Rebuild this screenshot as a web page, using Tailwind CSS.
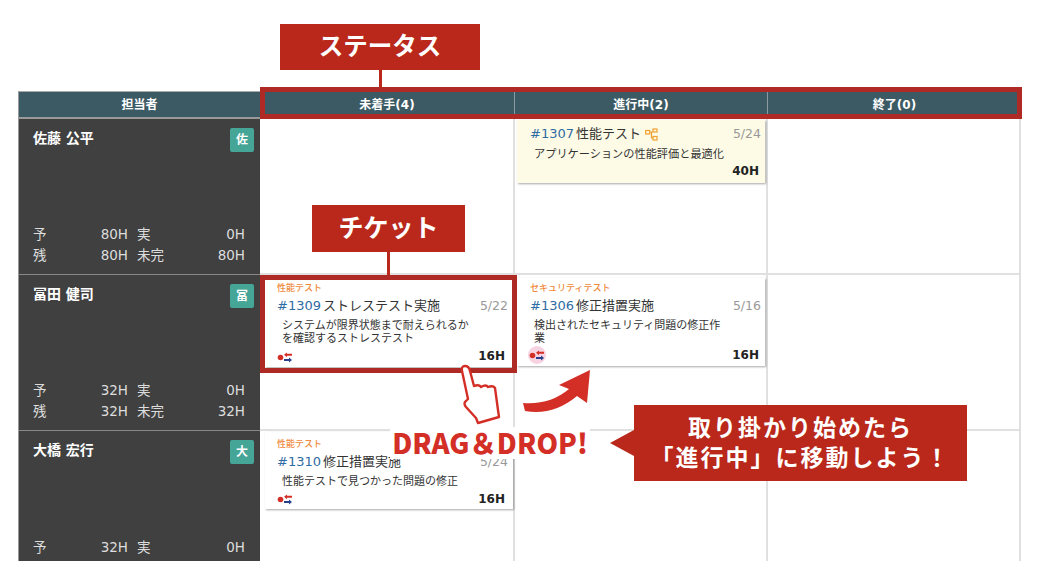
<!DOCTYPE html>
<html lang="ja">

<head>
    <meta charset="UTF-8">
    <title>チケットボード</title>
    <script src="https://cdn.jsdelivr.net/npm/@tailwindcss/browser@4"></script>
</head>

<body class="bg-white">
    <div class="relative w-[1040px] h-[585px] overflow-hidden pt-[91px] pl-[18px] font-['DejaVu_Sans','Noto_Sans_CJK_JP',sans-serif]">
        <!-- Board -->
        <div class="w-[1003px] h-[470px] overflow-hidden grid grid-cols-[242px_255px_253px_253px] grid-rows-[28px_156px_156px_156px]">
            <!-- Header -->
            <div class="bg-[#3c5a64] text-white text-[12px] font-bold flex items-center justify-center border-t border-l border-b-2 border-t-[#aaa] border-l-[#999] border-b-[#999]">担当者</div>
            <div class="bg-[#3c5a64] text-white text-[12px] font-bold flex items-center justify-center border-r border-[#8a9ba1]">未着手(4)</div>
            <div class="bg-[#3c5a64] text-white text-[12px] font-bold flex items-center justify-center border-r border-[#8a9ba1]">進行中(2)</div>
            <div class="bg-[#3c5a64] text-white text-[12px] font-bold flex items-center justify-center">終了(0)</div>

            <!-- Row 1 -->
            <div class="bg-[#404040] border-l border-l-[#999] border-b border-b-[#888] pl-[14px] pr-[6px] pt-[9px] flex flex-col justify-between pb-[8px]">
                <div class="flex justify-between">
                    <span class="text-white text-[14px] font-bold">佐藤 公平</span>
                    <span class="w-[24px] h-[24px] bg-[#45a597] rounded-[2px] text-white text-[12px] font-bold flex items-center justify-center">佐</span>
                </div>
                <div class="grid grid-cols-[20px_75px_9px_1fr] text-[#ddd] text-[13.5px] leading-[21px] pr-[9px]">
                    <span>予</span><span class="text-right">80H</span><span></span><span class="flex justify-between"><span>実</span><span>0H</span></span>
                    <span>残</span><span class="text-right">80H</span><span></span><span class="flex justify-between"><span>未完</span><span>80H</span></span>
                </div>
            </div>
            <div class="border-b-2 border-r-2 border-[#e0e0e0]"></div>
            <div class="border-b-2 border-r-2 border-[#e0e0e0] pl-[2px] pt-[1px]">
                <div class="w-[248px] h-[63px] bg-[#fdfae6] shadow-[1px_1px_2px_rgba(0,0,0,0.35)] pl-[13px] pr-[4px] pt-[6px] relative">
                    <div class="flex justify-between items-center h-[16px]">
                        <span class="flex items-center text-[13px] text-[#333]"><span class="text-[#2f6ca3] mr-[2px]">#1307</span>性能テスト
                            <svg class="ml-[4px]" width="13" height="13" viewBox="0 0 13 13" fill="none" stroke="#f0a030" stroke-width="1.2"><rect x="0.7" y="2.5" width="4" height="3.5" /><rect x="8" y="1" width="4" height="3" /><rect x="8" y="8.5" width="4" height="3.5" /><path d="M4.7 4H8M6.5 4V10H8" /></svg>
                        </span>
                        <span class="text-[12.5px] text-[#999]">5/24</span>
                    </div>
                    <p class="text-[11.2px] leading-[13px] text-[#333] pl-[4px] mt-[6px] whitespace-nowrap">アプリケーションの性能評価と最適化</p>
                    <span class="absolute right-[6px] bottom-[3px] text-[12px] font-bold text-[#222]">40H</span>
                </div>
            </div>
            <div class="border-b-2 border-r-2 border-[#e0e0e0]"></div>

            <!-- Row 2 -->
            <div class="bg-[#404040] border-l border-l-[#999] border-b border-b-[#888] pl-[14px] pr-[6px] pt-[9px] flex flex-col justify-between pb-[8px]">
                <div class="flex justify-between">
                    <span class="text-white text-[14px] font-bold">冨田 健司</span>
                    <span class="w-[24px] h-[24px] bg-[#45a597] rounded-[2px] text-white text-[12px] font-bold flex items-center justify-center">冨</span>
                </div>
                <div class="grid grid-cols-[20px_75px_9px_1fr] text-[#ddd] text-[13.5px] leading-[21px] pr-[9px]">
                    <span>予</span><span class="text-right">32H</span><span></span><span class="flex justify-between"><span>実</span><span>0H</span></span>
                    <span>残</span><span class="text-right">32H</span><span></span><span class="flex justify-between"><span>未完</span><span>32H</span></span>
                </div>
            </div>
            <div class="border-b-2 border-r-2 border-[#e0e0e0] pl-[5px] pt-[5px]">
                <div class="w-[248px] h-[87px] bg-white shadow-[1px_1px_2px_rgba(0,0,0,0.35)] pl-[12px] pr-[5px] pt-[2px] relative">
                    <div class="text-[9px] leading-[12px] font-medium text-[#f08a3c]">性能テスト</div>
                    <div class="flex justify-between items-center h-[16px] mt-[4px]">
                        <span class="text-[13px] text-[#333]"><span class="text-[#2f6ca3] mr-[2px]">#1309</span>ストレステスト実施</span>
                        <span class="text-[12.5px] text-[#999]">5/22</span>
                    </div>
                    <p class="text-[11px] leading-[13px] text-[#333] pl-[5px] mt-[5px] whitespace-nowrap">システムが限界状態まで耐えられるか<br>を確認するストレステスト</p>
                    <svg class="absolute left-[12px] bottom-[4px]" width="16" height="11" viewBox="0 0 16 11"><circle cx="3.5" cy="5.5" r="2.8" fill="#d32f27" /><path d="M7 2.8L10 0.4V1.8H15V3.8H10V5.2Z" fill="#d32f27" /><path d="M15 8L12 5.6V7H7V9H12V10.4Z" fill="#28408c" /></svg>
                    <span class="absolute right-[8px] bottom-[2px] text-[12px] font-bold text-[#222]">16H</span>
                </div>
            </div>
            <div class="border-b-2 border-r-2 border-[#e0e0e0] pl-[2px] pt-[3px]">
                <div class="w-[248px] h-[88px] bg-white shadow-[1px_1px_2px_rgba(0,0,0,0.35)] pl-[13px] pr-[4px] pt-[4px] relative">
                    <div class="text-[9px] leading-[12px] font-medium text-[#f08a3c]">セキュリティテスト</div>
                    <div class="flex justify-between items-center h-[16px] mt-[4px]">
                        <span class="text-[13px] text-[#333]"><span class="text-[#2f6ca3] mr-[2px]">#1306</span>修正措置実施</span>
                        <span class="text-[12.5px] text-[#999]">5/16</span>
                    </div>
                    <p class="text-[11px] leading-[13px] text-[#333] pl-[4px] mt-[5px] whitespace-nowrap">検出されたセキュリティ問題の修正作<br>業</p>
                    <span class="absolute left-[11px] bottom-[2px] w-[18px] h-[18px] rounded-full bg-[#f7d3e2] flex items-center justify-center">
                        <svg width="16" height="11" viewBox="0 0 16 11"><circle cx="3.5" cy="5.5" r="2.8" fill="#d32f27" /><path d="M7 2.8L10 0.4V1.8H15V3.8H10V5.2Z" fill="#d32f27" /><path d="M15 8L12 5.6V7H7V9H12V10.4Z" fill="#28408c" /></svg>
                    </span>
                    <span class="absolute right-[6px] bottom-[2px] text-[12px] font-bold text-[#222]">16H</span>
                </div>
            </div>
            <div class="border-b-2 border-r-2 border-[#e0e0e0]"></div>

            <!-- Row 3 -->
            <div class="bg-[#404040] border-l border-l-[#999] pl-[14px] pr-[6px] pt-[9px] flex flex-col justify-between pb-[8px]">
                <div class="flex justify-between">
                    <span class="text-white text-[14px] font-bold">大橋 宏行</span>
                    <span class="w-[24px] h-[24px] bg-[#45a597] rounded-[2px] text-white text-[12px] font-bold flex items-center justify-center">大</span>
                </div>
                <div class="grid grid-cols-[20px_75px_9px_1fr] text-[#ddd] text-[13.5px] leading-[21px] pr-[9px]">
                    <span>予</span><span class="text-right">32H</span><span></span><span class="flex justify-between"><span>実</span><span>0H</span></span>
                    <span>残</span><span class="text-right">32H</span><span></span><span class="flex justify-between"><span>未完</span><span>32H</span></span>
                </div>
            </div>
            <div class="border-r-2 border-[#e0e0e0] pl-[5px] pt-[1px]">
                <div class="w-[248px] h-[77px] bg-white shadow-[1px_1px_2px_rgba(0,0,0,0.35)] pl-[12px] pr-[5px] pt-[6px] relative">
                    <div class="text-[9px] leading-[12px] font-medium text-[#f08a3c]">性能テスト</div>
                    <div class="flex justify-between items-center h-[16px] mt-[4px]">
                        <span class="text-[13px] text-[#333]"><span class="text-[#2f6ca3] mr-[2px]">#1310</span>修正措置実施</span>
                        <span class="text-[12.5px] text-[#999]">5/24</span>
                    </div>
                    <p class="text-[11px] leading-[13px] text-[#333] pl-[5px] mt-[5px] whitespace-nowrap">性能テストで見つかった問題の修正</p>
                    <svg class="absolute left-[12px] bottom-[4px]" width="16" height="11" viewBox="0 0 16 11"><circle cx="3.5" cy="5.5" r="2.8" fill="#d32f27" /><path d="M7 2.8L10 0.4V1.8H15V3.8H10V5.2Z" fill="#d32f27" /><path d="M15 8L12 5.6V7H7V9H12V10.4Z" fill="#28408c" /></svg>
                    <span class="absolute right-[8px] bottom-[1px] text-[12px] font-bold text-[#222]">16H</span>
                </div>
            </div>
            <div class="border-r-2 border-[#e0e0e0]"></div>
            <div class="border-r-2 border-[#e0e0e0]"></div>
        </div>

        <!-- Annotations over the board -->
        <div class="absolute left-[260px] top-[87px] w-[762px] h-[32px] border-[5px] border-[#b02a25]"></div>
        <div class="absolute left-[379px] top-[70px] w-[3px] h-[18px] bg-[#b9281b]"></div>
        <div class="absolute left-[280px] top-[24px] w-[200px] h-[46px] bg-[#b9281b] text-white text-[24.5px] font-bold flex items-center justify-center pt-[1px]">ステータス</div>

        <div class="absolute left-[387px] top-[252px] w-[3px] h-[24px] bg-[#b9281b]"></div>
        <div class="absolute left-[312px] top-[205px] w-[153px] h-[47px] bg-[#b9281b] text-white text-[25px] font-bold flex items-center justify-center">チケット</div>
        <div class="absolute left-[260px] top-[275px] w-[257px] h-[98px] border-[5px] border-[#b02a25]"></div>

        <svg class="absolute left-[0px] top-[0px]" width="1040" height="585" viewBox="0 0 1040 585">
            <!-- hand -->
            <path d="M462 371Q461 366 465 366Q469 366 470 371L474 386Q479 384 481 387Q486 384 488 387Q493 385 495 388L498 410L499 417L478 423L476 418L466 407Q463 403 466 401L468 399Z" fill="white" stroke="#d32f27" stroke-width="2.4" stroke-linejoin="round" />
            <!-- arrow -->
            <path d="M523 403Q550 405 569 389L559 385L590 370L587 403L577 396Q553 416 525 411Z" fill="#d32f27" />
        </svg>

        <div class="absolute left-[390px] top-[427px] w-[200px] h-[32px] bg-white flex items-center justify-center">
            <span class="text-[#d32f27] text-[27.5px] leading-none font-black font-['Noto_Sans_CJK_JP',sans-serif] whitespace-nowrap">DRAG＆DROP!</span>
        </div>

        <div class="absolute left-[610px] top-[430px] w-0 h-0 border-y-[13px] border-y-transparent border-r-[24px] border-r-[#b9281b]"></div>
        <div class="absolute left-[634px] top-[405px] w-[333px] h-[76px] bg-[#b9281b] text-white text-[23px] leading-[30px] font-bold tracking-[2px] flex flex-col items-center justify-center">
            <span>取り掛かり始めたら</span>
            <span>「進行中」に移動しよう！</span>
        </div>
    </div>
</body>

</html>
